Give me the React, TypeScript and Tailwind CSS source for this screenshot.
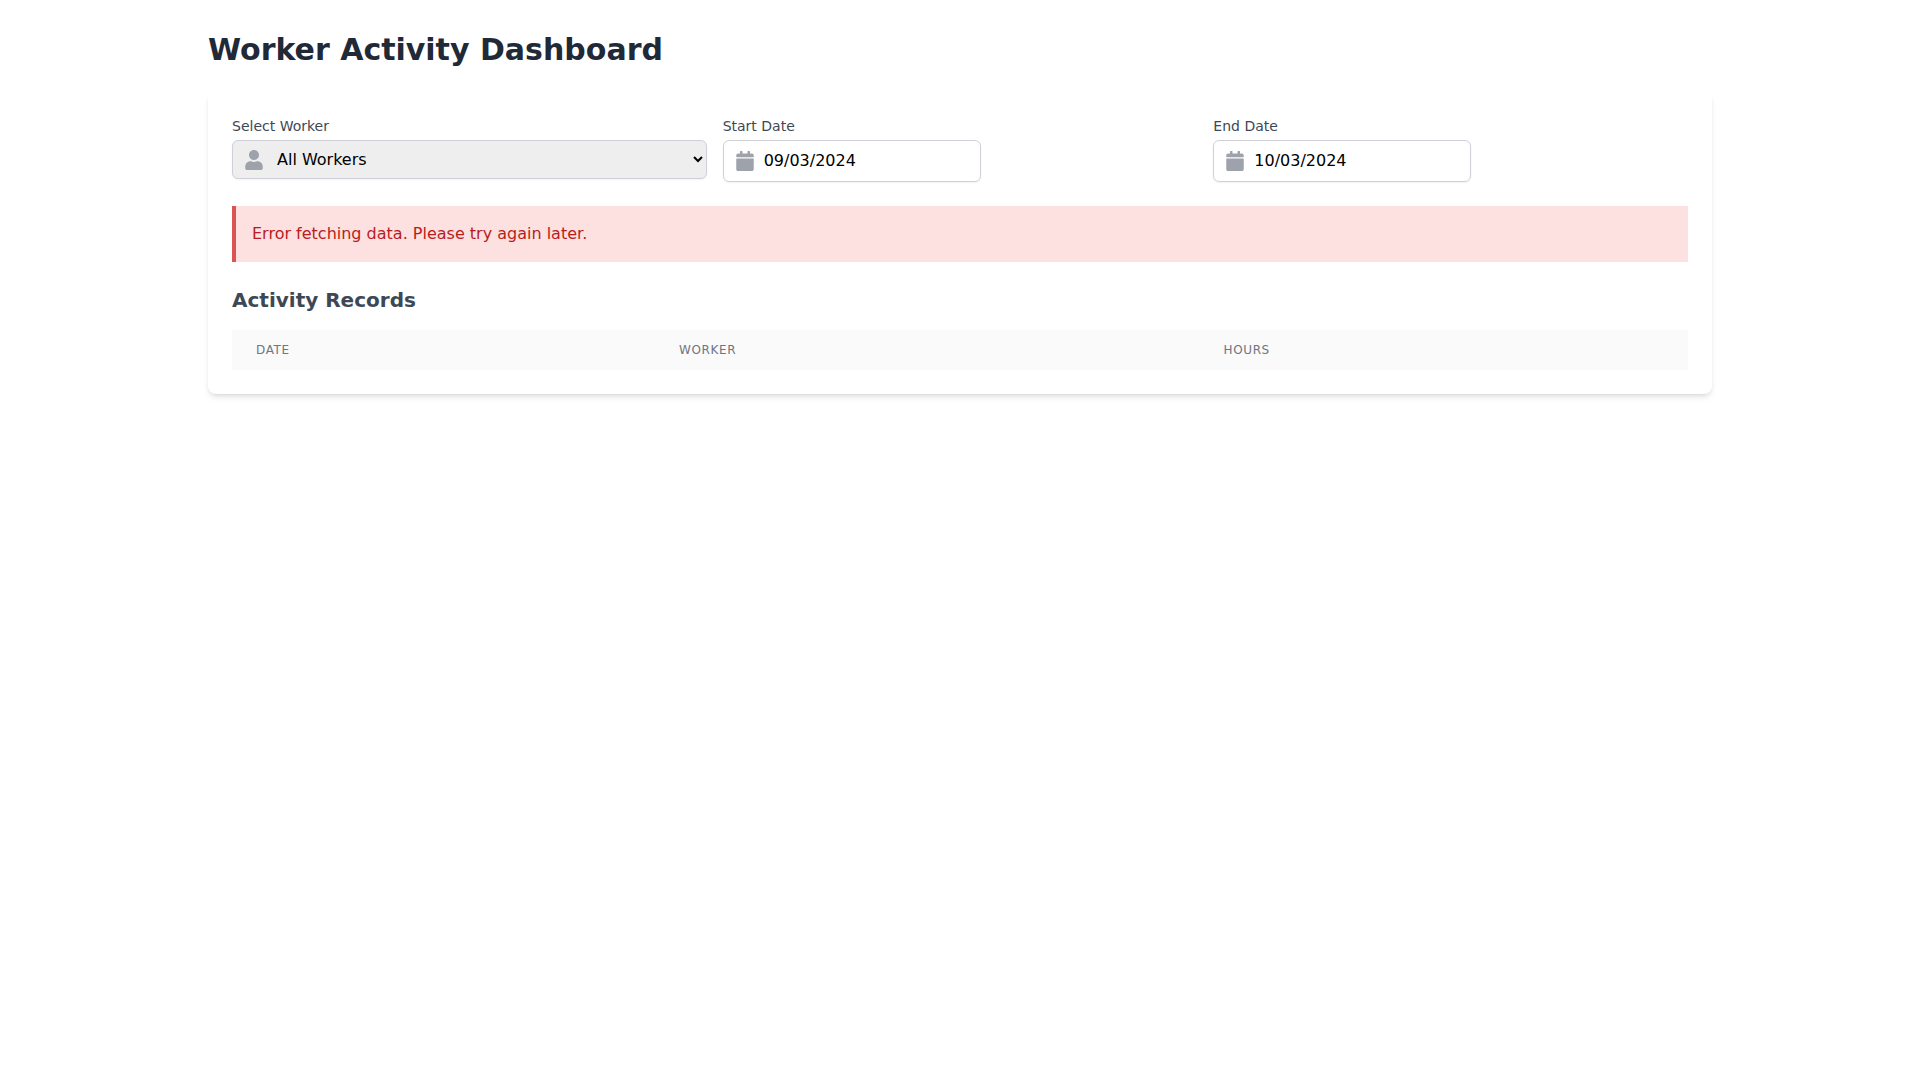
import { useState } from 'react';
import { FaCalendar, FaUser } from 'react-icons/fa';

interface ActivityRecord {
  id: number;
  date: string;
  worker: string;
  hours: number;
}

interface DateFieldProps {
  id: string;
  label: string;
  value: string;
  onChange: (value: string) => void;
}

const COLUMNS = ['Date', 'Worker', 'Hours'];

function DateField({ id, label, value, onChange }: DateFieldProps) {
  return (
    <div>
      <label htmlFor={id} className="block text-sm font-medium text-[#3e4855] mb-1">
        {label}
      </label>
      <div className="relative w-fit">
        <input
          id={id}
          type="text"
          value={value}
          onChange={(e) => onChange(e.target.value)}
          className="block pl-10 pr-4 py-2 border border-[#d0d1d8] rounded-md shadow-[0_1px_2px_0_rgba(0,0,0,0.05)] text-black"
        />
        <div className="absolute inset-y-0 left-0 pl-3 flex items-center pointer-events-none">
          <FaCalendar className="h-5 w-5 text-[#9ea3ab]" />
        </div>
      </div>
    </div>
  );
}

export default function App() {
  const [worker, setWorker] = useState('');
  const [startDate, setStartDate] = useState('09/03/2024');
  const [endDate, setEndDate] = useState('10/03/2024');
  const [error] = useState('Error fetching data. Please try again later.');
  const [records] = useState<ActivityRecord[]>([]);

  return (
    <main className="container mx-auto px-4 py-8 font-['DejaVu_Sans',sans-serif]">
      <h1 className="text-3xl font-bold mb-6 text-[#1f2937]">Worker Activity Dashboard</h1>

      <div className="bg-white shadow-md rounded-lg p-6">
        <div className="grid grid-cols-1 md:grid-cols-3 gap-4 mb-6">
          <div>
            <label htmlFor="worker" className="block text-sm font-medium text-[#3e4855] mb-1">
              Select Worker
            </label>
            <div className="relative">
              <select
                id="worker"
                value={worker}
                onChange={(e) => setWorker(e.target.value)}
                className="block w-full pl-10 py-2 bg-[#eeeeee] border border-[#d0d1d8] rounded-md shadow-[0_1px_2px_0_rgba(0,0,0,0.05)] text-black"
              >
                <option value="">All Workers</option>
              </select>
              <div className="absolute inset-y-0 left-0 pl-3 flex items-center pointer-events-none">
                <FaUser className="h-5 w-5 text-[#9ea3ab]" />
              </div>
            </div>
          </div>
          <DateField id="start-date" label="Start Date" value={startDate} onChange={setStartDate} />
          <DateField id="end-date" label="End Date" value={endDate} onChange={setEndDate} />
        </div>

        {error && (
          <div role="alert" className="bg-[#fde0e0] border-l-4 border-[#dc5353] text-[#b91c1c] p-4 mb-6">
            <p>{error}</p>
          </div>
        )}

        <h2 className="text-xl font-semibold mb-4 text-[#3e4855]">Activity Records</h2>
        <div className="overflow-x-auto">
          <table className="min-w-full">
            <thead className="bg-[#fafafa]">
              <tr>
                {COLUMNS.map((column) => (
                  <th
                    key={column}
                    className="px-6 py-3 text-left text-xs font-medium text-[#70757f] uppercase tracking-wider"
                  >
                    {column}
                  </th>
                ))}
              </tr>
            </thead>
            <tbody>
              {records.map((record) => (
                <tr key={record.id}>
                  <td className="px-6 py-4">{record.date}</td>
                  <td className="px-6 py-4">{record.worker}</td>
                  <td className="px-6 py-4">{record.hours}</td>
                </tr>
              ))}
            </tbody>
          </table>
        </div>
      </div>
    </main>
  );
}
